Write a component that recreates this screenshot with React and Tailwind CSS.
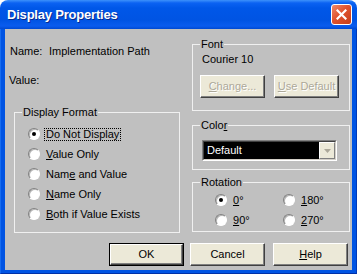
import React from 'react'

const font = { fontFamily: '"Liberation Sans", Arial, sans-serif' }

function Radio({ checked }) {
  return (
    <span className="relative inline-block w-[12px] h-[12px] shrink-0 rounded-full bg-white border border-t-[#808080] border-l-[#808080] border-b-white border-r-white shadow-[inset_1px_1px_0_#b4b4b4]">
      {checked && <span className="absolute left-[3px] top-[3px] w-[4px] h-[4px] rounded-full bg-black" />}
    </span>
  )
}

function RadioRow({ checked, focused, children, className = '' }) {
  return (
    <div className={`flex items-center h-[20px] ${className}`}>
      <Radio checked={checked} />
      <span
        className={`ml-[4px] px-[1px] leading-[11px] border ${focused ? 'border-dotted border-black' : 'border-transparent'}`}
      >
        {children}
      </span>
    </div>
  )
}

function GroupBox({ label, className = '', children }) {
  return (
    <div className={`relative border border-[#f0f0f0] ${className}`}>
      <span className="absolute -top-[7px] left-[7px] px-[1px] bg-[#c0c0c0] leading-[13px]">{label}</span>
      {children}
    </div>
  )
}

function Button({ children, disabled, isDefault, className = '' }) {
  const inner = (
    <div
      className={`flex h-full w-full items-center justify-center bg-[#ece9d8] border border-t-white border-l-white border-b-[#404040] border-r-[#404040] shadow-[inset_-1px_-1px_0_#808080] ${
        disabled ? 'text-[#aca899] [text-shadow:1px_1px_0_#fff]' : 'text-black'
      }`}
    >
      {children}
    </div>
  )
  if (isDefault) {
    return <div className={`h-[23px] border border-black ${className}`}>{inner}</div>
  }
  return <div className={`h-[23px] ${className}`}>{inner}</div>
}

export default function App() {
  return (
    <div className="w-[357px] h-[274px] flex flex-col text-[11px] text-black" style={font}>
      {/* title bar */}
      <div className="h-[29px] shrink-0 flex items-center rounded-t-[8px] bg-[linear-gradient(180deg,#3d91fb_0px,#0b62f2_3px,#0057e8_8px,#0054e3_20px,#0a5cee_26px,#0049d2_29px)] pl-[7px] pr-[5px]">
        <span className="flex-1 text-[13px] font-bold text-white tracking-[-0.2px] [text-shadow:1px_1px_0_#0a2a8c]">
          Display Properties
        </span>
        <div className="w-[21px] h-[21px] rounded-[3px] border border-white bg-[linear-gradient(135deg,#f08a6a_0%,#e0532e_45%,#c63d19_100%)] flex items-center justify-center">
          <svg width="11" height="11" viewBox="0 0 11 11">
            <path d="M1.5 1.5 L9.5 9.5 M9.5 1.5 L1.5 9.5" stroke="#fff" strokeWidth="2.2" strokeLinecap="square" />
          </svg>
        </div>
      </div>

      {/* frame */}
      <div className="flex-1 flex bg-[#0054e3] pl-[4px] pr-[4px] pb-[3px] border-l border-l-[#166cf0] border-r border-r-[#0039b8] border-b border-b-[#0031a8]">
        <div className="flex-1 flex flex-col bg-[#c0c0c0] pl-[4px]">
          <div className="flex">
            {/* left column */}
            <div className="w-[170px] flex flex-col">
              <div className="flex leading-[13px] mt-[16px] pl-[1px]">
                <span className="w-[39px]">Name:</span>
                <span>Implementation Path</span>
              </div>
              <div className="leading-[13px] mt-[16px]">Value:</div>
              <GroupBox label="Display Format" className="ml-[5px] mt-[25px] w-[166px] h-[121px]">
                <div className="pt-[11px] pl-[13px]">
                  <RadioRow checked focused>
                    Do Not Display
                  </RadioRow>
                  <RadioRow>
                    <u>V</u>alue Only
                  </RadioRow>
                  <RadioRow>
                    Nam<u>e</u> and Value
                  </RadioRow>
                  <RadioRow>
                    <u>N</u>ame Only
                  </RadioRow>
                  <RadioRow>
                    <u>B</u>oth if Value Exists
                  </RadioRow>
                </div>
              </GroupBox>
            </div>

            {/* right column */}
            <div className="w-[158px] ml-[13px] flex flex-col">
              <GroupBox label="Font" className="mt-[15px] h-[67px]">
                <div className="pl-[9px] pt-[8px] leading-[13px]">Courier 10</div>
                <div className="flex pl-[7px] mt-[9px]">
                  <Button disabled className="w-[65px]">
                    <span><u>C</u>hange...</span>
                  </Button>
                  <Button disabled className="w-[65px] ml-[9px]">
                    <span><u>U</u>se Default</span>
                  </Button>
                </div>
              </GroupBox>

              <GroupBox
                label={
                  <span>
                    Colo<u>r</u>
                  </span>
                }
                className="mt-[14px] h-[45px]"
              >
                <div className="ml-[9px] mt-[14px] w-[135px] h-[21px] flex border border-t-[#808080] border-l-[#808080] border-b-white border-r-white">
                  <div className="flex-1 flex border border-t-[#404040] border-l-[#404040] border-b-[#d4d0c8] border-r-[#d4d0c8] bg-black">
                    <div className="flex-1 flex items-center pl-[3px] text-white leading-[13px]">Default</div>
                    <div className="w-[16px] flex items-center justify-center bg-[#ece9d8] border border-t-white border-l-white border-b-[#808080] border-r-[#808080]">
                      <svg width="7" height="4" viewBox="0 0 7 4">
                        <path d="M0 0 H7 L3.5 4 Z" fill="#aca899" />
                      </svg>
                    </div>
                  </div>
                </div>
              </GroupBox>

              <GroupBox label="Rotation" className="mt-[12px] h-[50px]">
                <div className="grid grid-cols-[68px_1fr] pl-[22px] pt-[7px]">
                  <RadioRow checked className="h-[18px]">
                    <u>0</u>°
                  </RadioRow>
                  <RadioRow className="h-[18px]">
                    <u>1</u>80°
                  </RadioRow>
                  <RadioRow className="h-[18px]">
                    <u>9</u>0°
                  </RadioRow>
                  <RadioRow className="h-[18px]">
                    <u>2</u>70°
                  </RadioRow>
                </div>
              </GroupBox>
            </div>
          </div>

          {/* buttons */}
          <div className="flex mt-[10px] pl-[100px]">
            <Button isDefault className="w-[75px]">OK</Button>
            <Button className="w-[75px] ml-[6px]">Cancel</Button>
            <Button className="w-[75px] ml-[8px]">
              <span><u>H</u>elp</span>
            </Button>
          </div>
        </div>
      </div>
    </div>
  )
}
